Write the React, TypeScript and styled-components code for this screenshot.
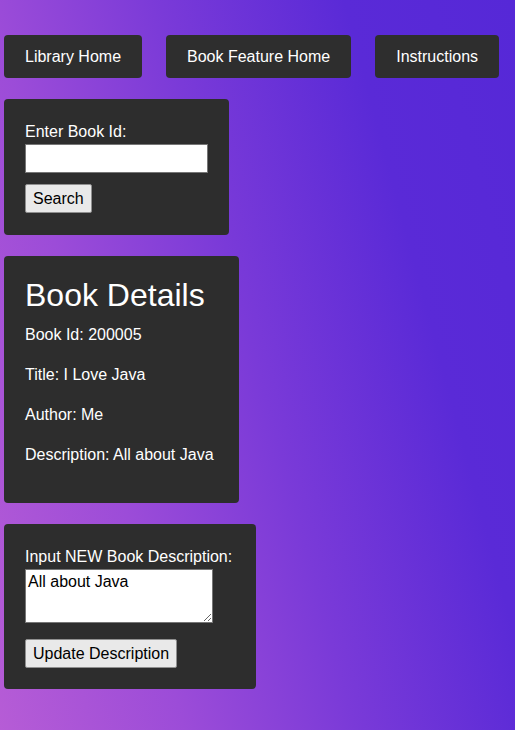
import React from "react";
import styled, { createGlobalStyle } from "styled-components";

const GlobalStyle = createGlobalStyle`
  html {
    height: 100%;
    background: linear-gradient(75deg, #b65cd6 0%, #9c4cd8 26%, #7a3ad8 50%, #5a2ad7 76%, #5628d7 100%);
  }
  body {
    margin: 0;
    font-family: "Liberation Sans", Arial, sans-serif;
    font-size: 16px;
  }
`;

const Page = styled.div`
  display: flex;
  flex-direction: column;
  align-items: flex-start;
  gap: 21px;
  padding: 35px 4px 20px;
`;

const Nav = styled.nav`
  display: flex;
  gap: 24px;
`;

const NavButton = styled.button`
  background: #2e2e2e;
  color: #ffffff;
  border: none;
  border-radius: 4px;
  padding: 12px 21px;
  font-family: "Liberation Sans", Arial, sans-serif;
  font-size: 16px;
  line-height: 19px;
  height: 43px;
  cursor: pointer;
`;

const Panel = styled.section<{ $padRight?: number; $padBottom?: number }>`
  background: #2d2d2d;
  color: #ffffff;
  border-radius: 4px;
  padding: 21px ${(p) => p.$padRight ?? 21}px ${(p) => p.$padBottom ?? 21}px 21px;
  display: flex;
  flex-direction: column;
  align-items: flex-start;
`;

const Label = styled.label`
  display: block;
  line-height: 24px;
`;

const TextInput = styled.input`
  display: block;
  box-sizing: border-box;
  width: 183px;
  height: 29px;
  border: 1px solid #767676;
  background: #ffffff;
  font-family: "Liberation Sans", Arial, sans-serif;
  font-size: 16px;
  padding: 1px 3px;
  margin: 0;
`;

const TextArea = styled.textarea`
  display: block;
  box-sizing: border-box;
  width: 188px;
  height: 54px;
  border: 1px solid #767676;
  background: #ffffff;
  color: #000;
  font-family: "Liberation Sans", Arial, sans-serif;
  font-size: 16px;
  line-height: 19px;
  padding: 2px 2px;
  margin: 0;
`;

const FormButton = styled.button<{ $gap: number }>`
  margin-top: ${(p) => p.$gap}px;
  height: 29px;
  box-sizing: border-box;
  padding: 0 7px;
  background: #e9e9e9;
  color: #000;
  border: 1px solid #8f8f8f;
  border-radius: 2px;
  font-family: "Liberation Sans", Arial, sans-serif;
  font-size: 16px;
  cursor: pointer;
`;

const Heading = styled.h1`
  margin: 0 0 9px;
  font-size: 32px;
  font-weight: 500;
  line-height: 37px;
`;

const Detail = styled.p`
  margin: 0 0 16px;
  line-height: 24px;
`;

export default function App() {
  return (
    <>
      <GlobalStyle />
      <Page>
        <Nav>
          <NavButton>Library Home</NavButton>
          <NavButton>Book Feature Home</NavButton>
          <NavButton>Instructions</NavButton>
        </Nav>

        <Panel $padBottom={22}>
          <Label htmlFor="bookId">Enter Book Id:</Label>
          <TextInput id="bookId" type="text" />
          <FormButton $gap={11}>Search</FormButton>
        </Panel>

        <Panel $padRight={25} $padBottom={20}>
          <Heading>Book Details</Heading>
          <Detail>Book Id: 200005</Detail>
          <Detail>Title: I Love Java</Detail>
          <Detail>Author: Me</Detail>
          <Detail>Description: All about Java</Detail>
        </Panel>

        <Panel $padRight={24}>
          <Label htmlFor="desc">Input NEW Book Description:</Label>
          <TextArea id="desc" defaultValue="All about Java" />
          <FormButton $gap={16}>Update Description</FormButton>
        </Panel>
      </Page>
    </>
  );
}
